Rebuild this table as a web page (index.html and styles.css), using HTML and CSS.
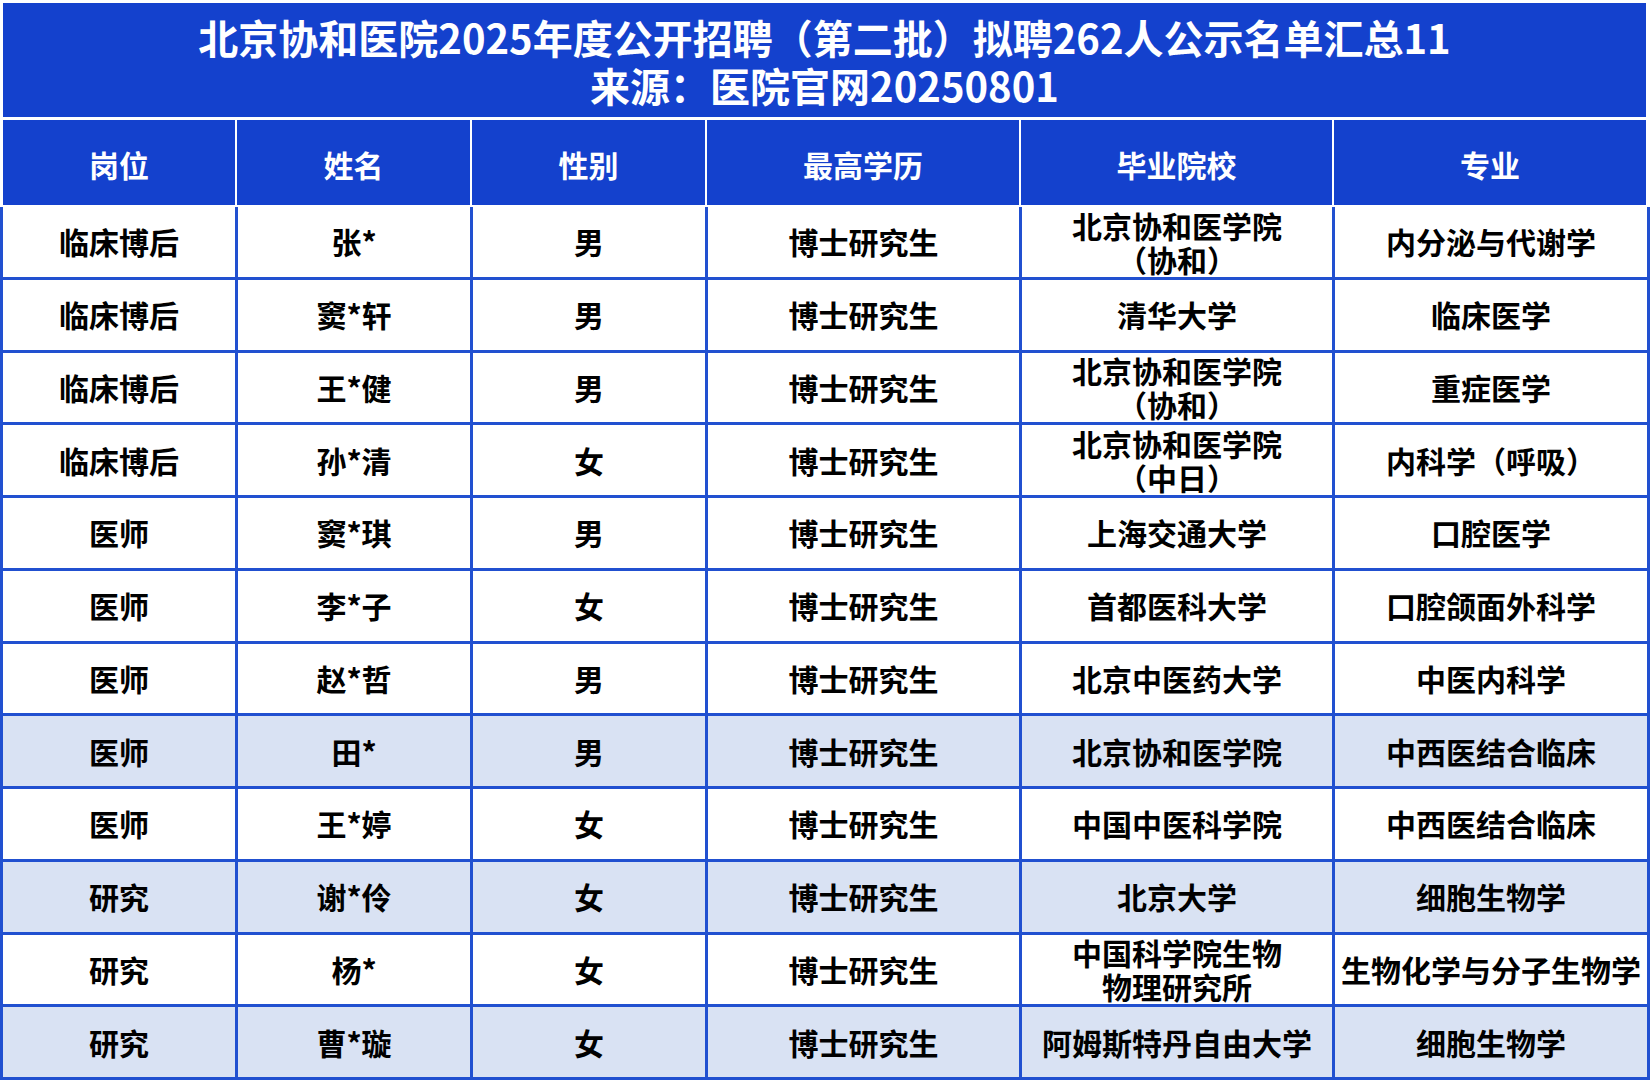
FILE: index.html
```html
<!DOCTYPE html>
<html lang="zh-CN">
<head>
<meta charset="utf-8">
<title>北京协和医院2025年度公开招聘（第二批）拟聘262人公示名单汇总11</title>
<link rel="stylesheet" href="styles.css">
</head>
<body>
<div class="page">
  <div class="title">
    <div class="title-line">北京协和医院2025年度公开招聘（第二批）拟聘262人公示名单汇总11</div>
    <div class="title-line">来源：医院官网20250801</div>
  </div>
  <div class="head">
    <div class="hcell">岗位</div>
    <div class="hcell">姓名</div>
    <div class="hcell">性别</div>
    <div class="hcell">最高学历</div>
    <div class="hcell">毕业院校</div>
    <div class="hcell">专业</div>
  </div>
  <div class="body">
    <div class="row">
      <div class="cell">临床博后</div><div class="cell">张*</div><div class="cell">男</div><div class="cell">博士研究生</div>
      <div class="cell two">北京协和医学院<br><span class="sub">（协和）</span></div><div class="cell">内分泌与代谢学</div>
    </div>
    <div class="row">
      <div class="cell">临床博后</div><div class="cell">窦*轩</div><div class="cell">男</div><div class="cell">博士研究生</div>
      <div class="cell">清华大学</div><div class="cell">临床医学</div>
    </div>
    <div class="row">
      <div class="cell">临床博后</div><div class="cell">王*健</div><div class="cell">男</div><div class="cell">博士研究生</div>
      <div class="cell two">北京协和医学院<br><span class="sub">（协和）</span></div><div class="cell">重症医学</div>
    </div>
    <div class="row">
      <div class="cell">临床博后</div><div class="cell">孙*清</div><div class="cell">女</div><div class="cell">博士研究生</div>
      <div class="cell two">北京协和医学院<br><span class="sub">（中日）</span></div><div class="cell">内科学（呼吸）</div>
    </div>
    <div class="row">
      <div class="cell">医师</div><div class="cell">窦*琪</div><div class="cell">男</div><div class="cell">博士研究生</div>
      <div class="cell">上海交通大学</div><div class="cell">口腔医学</div>
    </div>
    <div class="row">
      <div class="cell">医师</div><div class="cell">李*子</div><div class="cell">女</div><div class="cell">博士研究生</div>
      <div class="cell">首都医科大学</div><div class="cell">口腔颌面外科学</div>
    </div>
    <div class="row">
      <div class="cell">医师</div><div class="cell">赵*哲</div><div class="cell">男</div><div class="cell">博士研究生</div>
      <div class="cell">北京中医药大学</div><div class="cell">中医内科学</div>
    </div>
    <div class="row alt">
      <div class="cell">医师</div><div class="cell">田*</div><div class="cell">男</div><div class="cell">博士研究生</div>
      <div class="cell">北京协和医学院</div><div class="cell">中西医结合临床</div>
    </div>
    <div class="row">
      <div class="cell">医师</div><div class="cell">王*婷</div><div class="cell">女</div><div class="cell">博士研究生</div>
      <div class="cell">中国中医科学院</div><div class="cell">中西医结合临床</div>
    </div>
    <div class="row alt">
      <div class="cell">研究</div><div class="cell">谢*伶</div><div class="cell">女</div><div class="cell">博士研究生</div>
      <div class="cell">北京大学</div><div class="cell">细胞生物学</div>
    </div>
    <div class="row">
      <div class="cell">研究</div><div class="cell">杨*</div><div class="cell">女</div><div class="cell">博士研究生</div>
      <div class="cell two">中国科学院生物<br>物理研究所</div><div class="cell">生物化学与分子生物学</div>
    </div>
    <div class="row alt">
      <div class="cell">研究</div><div class="cell">曹*璇</div><div class="cell">女</div><div class="cell">博士研究生</div>
      <div class="cell">阿姆斯特丹自由大学</div><div class="cell">细胞生物学</div>
    </div>
  </div>
</div>
</body>
</html>
```

FILE: styles.css
```css
* {
  box-sizing: border-box;
}

html, body {
  margin: 0;
  padding: 0;
  background: #ffffff;
}

body {
  width: 1650px;
  height: 1080px;
  overflow: hidden;
  font-family: "Noto Sans CJK SC", "Noto Sans", sans-serif;
  font-weight: 700;
}

.page {
  padding-top: 3px;
  display: flex;
  flex-direction: column;
}

.title {
  margin: 0 4px 0 3px;
  height: 114px;
  background: #1441cd;
  color: #ffffff;
  display: flex;
  flex-direction: column;
  align-items: center;
  justify-content: center;
  font-size: 40px;
  line-height: 48px;
  padding-top: 1px;
}

.title-line {
  white-space: nowrap;
}

.head {
  margin: 3px 4px 0 3px;
  height: 85px;
  display: grid;
  grid-template-columns: 232px 233px 233px 312px 311px 312px;
  column-gap: 2px;
  background: #ffffff;
}

.hcell {
  background: #1441cd;
  color: #ffffff;
  font-size: 30px;
  display: flex;
  align-items: center;
  justify-content: center;
  padding-top: 2px;
}

.body {
  margin-top: 2px;
  height: 873px;
  display: grid;
  grid-template-columns: 232px 232px 232px 311px 310px 312px;
  grid-template-rows: repeat(12, 69.75px);
  gap: 3px;
  background: #2150d0;
  border: 3px solid #2150d0;
  border-top: 0;
}

.row {
  display: contents;
}

.cell {
  min-height: 0;
  overflow: visible;
  background: #ffffff;
  color: #000000;
  font-size: 30px;
  line-height: 35px;
  display: flex;
  align-items: center;
  justify-content: center;
  text-align: center;
  white-space: nowrap;
  padding-top: 0;
}

.row.alt .cell {
  background: #d9e2f3;
}

.cell.two {
  flex-direction: column;
  line-height: 34px;
  padding-top: 0;
}

.sub {
  font-feature-settings: "halt";
}
```
